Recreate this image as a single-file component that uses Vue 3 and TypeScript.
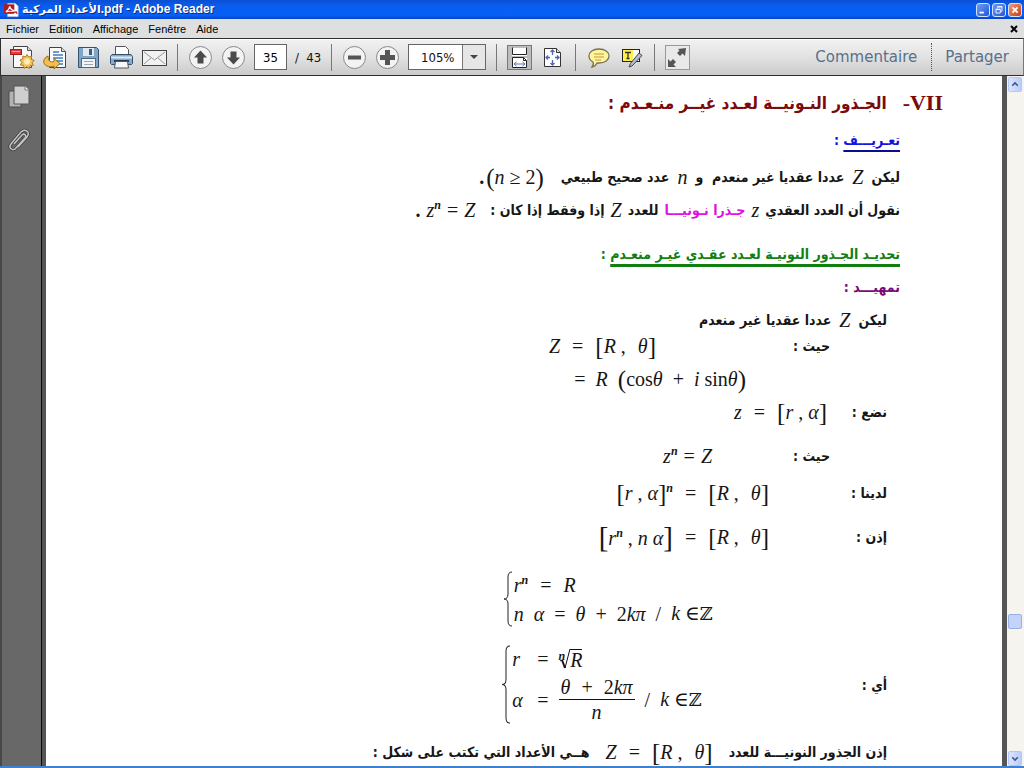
<script setup lang="ts">
import { ref } from 'vue'

const menus: string[] = ['Fichier', 'Edition', 'Affichage', 'Fenêtre', 'Aide']
const page = ref('35')
const zoom = ref('105%')
</script>

<template>
  <div class="app">
    <header class="titlebar">
      <svg class="logo" viewBox="0 0 16 16" aria-hidden="true">
        <path d="M4 1h8l3 3v11H4z" fill="#fff" stroke="#b9c4dc" />
        <rect x="0" y="2" width="11" height="10" fill="#b3161b" />
        <path d="M2 10c3-2 4-4 4-6 1 3 2 4 8 6-6-1-9-1-12 0z" fill="none" stroke="#fff" stroke-width="1.3" />
        <path d="M6 11l7-1 1 2" fill="none" stroke="#b3161b" stroke-width="1.3" />
      </svg>
      <h1><bdi>الأعداد المركبة</bdi>.pdf - Adobe Reader</h1>
      <div class="winbuttons">
        <button aria-label="Réduire"><svg viewBox="0 0 14 14"><path d="M3 10h5" stroke="#fff" stroke-width="2" /></svg></button>
        <button aria-label="Restaurer"><svg viewBox="0 0 14 14"><path d="M5.500 5V3.500h5v5H9M3.500 6.500h5v4h-5zM3 6h6M5 3h6" fill="none" stroke="#fff" /></svg></button>
        <button class="close" aria-label="Fermer"><svg viewBox="0 0 14 14"><path d="M4 4l6 6M10 4l-6 6" stroke="#fff" stroke-width="2" /></svg></button>
      </div>
    </header>

    <nav class="menubar">
      <button v-for="m in menus" :key="m">{{ m }}</button>
      <button class="closedoc" aria-label="Fermer le document"><svg viewBox="0 0 8 8"><path d="M1 1l6 6M7 1L1 7" stroke="#000" stroke-width="2" /></svg></button>
    </nav>

    <div class="toolbar">
      <button aria-label="Créer un PDF">
        <svg viewBox="0 0 25 25">
          <path d="M3.500 1.500h14l4 4v17h-18z" fill="#f8f9fa" stroke="#444" /><path d="M17.500 1.500v4h4" fill="#ddd" stroke="#555" />
          <rect x="0.500" y="4.500" width="11" height="5" fill="#dc3c3c" stroke="#a31f22" /><path d="M2 6.500h8" stroke="#f0a0a0" />
          <path d="M17 9.500l1.700 2.600 3-.8-.4 3 3 1.200-2.300 2 1.300 2.800-3.100.2-.9 3-2.500-1.800-2.600 1.700-.7-3-3.100-.4 1.500-2.700-2-2.300 2.900-1 .1-3 2.800 1z" fill="#f6c663" stroke="#b57a1c" />
          <circle cx="17" cy="16.500" r="3" fill="#fdebb8" />
        </svg>
      </button>
      <button aria-label="Ouvrir">
        <svg viewBox="0 0 25 25">
          <path d="M6.500 2.500h12l4 4v16h-16z" fill="#fbfbfb" stroke="#444" /><path d="M18.500 2.500v4h4" fill="#ddd" stroke="#555" />
          <path d="M10 7h6M10 10h10M10 13h10M13 16h7M15 19h5" stroke="#3f7ec0" stroke-width="1.400" />
          <path d="M5 11c-5 2-6 8-1 10 2 1 5 1 7 0v3l6-5.500-6-5v3c-3 1-6 0-6-5.500z" fill="#f2c04e" stroke="#99691b" />
        </svg>
      </button>
      <button aria-label="Enregistrer">
        <svg viewBox="0 0 25 25">
          <path d="M2.500 2.500h18l2 2v18h-20z" fill="#7fa5c7" stroke="#34526f" />
          <rect x="7" y="3" width="11" height="8" fill="#dfe9f2" /><rect x="13" y="4" width="3" height="6" fill="#3d5d7c" />
          <rect x="5.500" y="13.500" width="14" height="9" fill="#f3f4f5" stroke="#4c6a86" /><path d="M8 16.500h9M8 19.500h9" stroke="#9aa7b3" />
        </svg>
      </button>
      <button aria-label="Imprimer">
        <svg viewBox="0 0 25 25">
          <path d="M6.500 1.500h10l3 3v7h-13z" fill="#fff" stroke="#555" />
          <path d="M3 9.500h19l1.500 2v7l-1 1h-20l-1-1v-7z" fill="#86a9c9" stroke="#33526f" />
          <path d="M2 12.500h21" stroke="#dce9f4" stroke-width="2" /><path d="M5 16h15" stroke="#243b50" stroke-width="2" />
          <path d="M6.500 16.500h12l1 6.500h-14z" fill="#f6f7f8" stroke="#555" />
        </svg>
      </button>
      <button aria-label="Envoyer par courriel">
        <svg viewBox="0 0 25 25">
          <rect x="0.500" y="5.500" width="24" height="15" fill="#f1f1f1" stroke="#444" />
          <path d="M2 7l10.500 8L23 7M2 19l7-6M23 19l-7-6" fill="none" stroke="#999" />
        </svg>
      </button>
      <span class="sep"></span>
      <button aria-label="Page précédente">
        <svg viewBox="0 0 25 25"><circle cx="12.500" cy="12.500" r="11" fill="#f3f3f3" stroke="#888" /><path d="M12.500 5.500l6.500 7h-3.500v6h-6v-6H6z" fill="#4a4a4a" /></svg>
      </button>
      <button aria-label="Page suivante">
        <svg viewBox="0 0 25 25"><circle cx="12.500" cy="12.500" r="11" fill="#f3f3f3" stroke="#888" /><path d="M12.500 19.500l6.500-7h-3.500v-6h-6v6H6z" fill="#4a4a4a" /></svg>
      </button>
      <input v-model="page" class="pagebox" aria-label="Page" />
      <span class="total">/&nbsp; 43</span>
      <span class="sep"></span>
      <button aria-label="Zoom arrière">
        <svg viewBox="0 0 25 25"><circle cx="12.500" cy="12.500" r="11" fill="#f3f3f3" stroke="#888" /><path d="M6 12.500h13" stroke="#555" stroke-width="4" /></svg>
      </button>
      <button aria-label="Zoom avant">
        <svg viewBox="0 0 25 25"><circle cx="12.500" cy="12.500" r="11" fill="#f3f3f3" stroke="#888" /><path d="M5 12.500h15M12.500 5v15" stroke="#555" stroke-width="5" /></svg>
      </button>
      <div class="zoombox">
        <select v-model="zoom" aria-label="Zoom"><option>105%</option></select>
        <span class="arrow"><svg viewBox="0 0 8 4"><path d="M0 0h8L4 4z" fill="#444" /></svg></span>
      </div>
      <span class="sep"></span>
      <button class="pressed" aria-label="Largeur de page">
        <svg viewBox="0 0 23 23">
          <path d="M4 2h15v8H4zM4 12h15v10H4z" fill="#fff" /><path d="M4.500 1.500v7h14v-7" fill="none" stroke="#222" />
          <path d="M4.500 21.500v-10h11l3 3v7z" fill="#fff" stroke="#222" /><path d="M15.500 11.500v3h3" fill="none" stroke="#222" />
          <path d="M6 18h11M8.500 16L6 18l2.500 2M14.500 16l2.500 2-2.500 2" fill="none" stroke="#5b74b4" />
        </svg>
      </button>
      <button aria-label="Page entière">
        <svg viewBox="0 0 25 25">
          <path d="M4.500 3.500h12l4 4v14h-16z" fill="#fff" stroke="#333" /><path d="M16.500 3.500v4h4" fill="#ddd" stroke="#333" />
          <path d="M6 12.500h4M15 12.500h4M12.500 5v5M12.500 15v5M8 10.500l-2 2 2 2M17 10.500l2 2-2 2M10.500 7l2-2 2 2M10.500 18l2 2 2-2" fill="none" stroke="#4d69b3" stroke-width="1.300" />
        </svg>
      </button>
      <span class="sep"></span>
      <button aria-label="Ajouter une note">
        <svg viewBox="0 0 25 25">
          <path d="M13 4c6 0 10 3 10 7s-4 7-10 7h-2c-1 2-3 4-5 4 1-1 2-3 1-5-2-1-4-3-4-6 0-4 4-7 10-7z" fill="#fff59a" stroke="#77705c" stroke-width="1.300" />
          <path d="M8 9h10M8 12h10M9 15h6" stroke="#c29c3a" />
        </svg>
      </button>
      <button aria-label="Surligner le texte">
        <svg viewBox="0 0 25 25">
          <rect x="3.500" y="4.500" width="17" height="12" fill="#fff" stroke="#222" /><rect x="4" y="5" width="10" height="11" fill="#fff04a" />
          <path d="M6 7.500h6M9 7v7M7.500 13.500h3" stroke="#333" stroke-width="1.300" />
          <path d="M13 21l-3 1 1.500-3.500L20 8l3 2.500z" fill="#b5bdca" stroke="#3d4658" />
        </svg>
      </button>
      <span class="sep"></span>
      <button class="framed" aria-label="Mode lecture">
        <svg viewBox="0 0 23 23"><path d="M12 3l8-1-1 8-2.500-2.500-2.500 2.500-3-3 2.500-2.500zM2 13l2.500 2.500L7 13l3 3-2.500 2.500L10 21H2z" fill="#555" /></svg>
      </button>
      <a class="task first" href="#commentaire">Commentaire</a>
      <a class="task" href="#partager">Partager</a>
    </div>

    <div class="work">
      <aside class="side">
        <button aria-label="Vignettes"><svg viewBox="0 0 22 24"><path d="M1 6h12v16H1z" fill="#b4b4b4" stroke="#4a4a4a" /><path d="M6 1h11l4 4v14H6z" fill="#cfcfcf" stroke="#555" /><path d="M17 1v4h4" fill="#f2f2f2" stroke="#777" /></svg></button>
        <button aria-label="Pièces jointes"><svg viewBox="0 0 22 24"><path d="M6 16l8-9c2-2 5 0 3 3l-9 10c-3 4-8 0-5-4L13 4c4-4 10 0 6 5l-9 10" fill="none" stroke="#3f3f3f" stroke-width="3" /><path d="M6 16l8-9c2-2 5 0 3 3l-9 10c-3 4-8 0-5-4L13 4c4-4 10 0 6 5l-9 10" fill="none" stroke="#c4c4c4" stroke-width="1.500" /></svg></button>
      </aside>

      <main class="page" dir="rtl">
        <h2 class="row sec"><span class="num" dir="ltr">-VII</span><span>الجـذور النـونيــة لعـدد غيــر منـعـدم :</span></h2>

        <h3 class="row g13 def"><u>تعـريـــف</u>&nbsp;:</h3>

        <p class="row g13 s8">
          <span>ليكن</span><i class="m">Z</i><span>عددا عقديا غير منعدم &nbsp;و</span><i class="m">n</i><span>عدد صحيح طبيعي</span>
          <span class="f far tight" dir="ltr"><b>.</b><span><span class="br">(</span><i>n</i> ≥ 2<span class="br">)</span></span></span>
        </p>

        <p class="row g9 s6">
          <span>نقول أن العدد العقدي</span><i class="m">z</i><span class="pink">جـذرا نـونيـــا</span><span>للعدد</span><i class="m">Z</i><span>إذا وفقط إذا كان :</span>
          <span class="f far" dir="ltr"><b>.</b><i>z<sup>n</sup></i> = <i>Z</i></span>
        </p>

        <h3 class="row g20 green"><u>تحديـد الجـذور النونيـة لعـدد عقـدي غيـر منعـدم</u>&nbsp;:</h3>
        <h3 class="row g9 purple">تمهيـــد :</h3>

        <p class="row g9 in s8"><span>ليكن</span><i class="m">Z</i><span>عددا عقديا غير منعدم</span></p>

        <p class="row g2 deep">
          <span class="l174">حيث :</span>
          <span class="f wide" dir="ltr"><i>Z</i><span>=</span><span><span class="br">[</span><i>R</i> ,</span><span><i>θ</i><span class="br">]</span></span></span>
        </p>
        <p class="row g9 in">
          <span class="l141"></span>
          <span class="f mid" dir="ltr"><span>=</span><i>R</i><span><span class="br">(</span>cos<i>θ</i></span><span>+</span><span><i>i</i> sin<i>θ</i><span class="br">)</span></span></span>
        </p>
        <p class="row g9 in">
          <span class="l60">نضع :</span>
          <span class="f wide" dir="ltr"><i>z</i><span>=</span><span><span class="br">[</span><i>r</i> , <i>α</i><span class="br">]</span></span></span>
        </p>
        <p class="row g20 deep">
          <span class="l118">حيث :</span>
          <span class="f" dir="ltr"><i>z<sup>n</sup></i> = <i>Z</i></span>
        </p>
        <p class="row g13 in">
          <span class="l118">لدينا :</span>
          <span class="f wide" dir="ltr"><span><span class="br">[</span><i>r</i> , <i>α</i><span class="br">]</span><sup><i>n</i></sup></span><span>=</span><span><span class="br">[</span><i>R</i> ,</span><span><i>θ</i><span class="br">]</span></span></span>
        </p>
        <p class="row g20 in">
          <span class="l118">إذن :</span>
          <span class="f wide" dir="ltr"><span><span class="br tall">[</span><i>r<sup>n</sup></i> , <i>n</i> <i>α</i><span class="br tall">]</span></span><span>=</span><span><span class="br">[</span><i>R</i> ,</span><span><i>θ</i><span class="br">]</span></span></span>
        </p>

        <div class="row g22 in">
          <span class="l174"></span>
          <div class="cases" dir="ltr">
            <svg class="brace" viewBox="0 0 8 56" preserveAspectRatio="none"><path d="M8 1Q4 1 4 6V23Q4 28 0 28Q4 28 4 33V50Q4 55 8 55" fill="none" stroke="#222" /></svg>
            <div class="lines">
              <span class="f wide"><i>r<sup>n</sup></i><span>=</span><i>R</i></span>
              <span class="f mid"><i>n</i><i>α</i><span>=</span><i>θ</i><span>+</span><span>2<i>kπ</i></span><span>/</span><span><i>k</i> ∈<span class="zz">ℤ</span></span></span>
            </div>
          </div>
        </div>

        <div class="row g18 in">
          <span class="l185">أي :</span>
          <div class="cases" dir="ltr">
            <svg class="brace" viewBox="0 0 8 78" preserveAspectRatio="none"><path d="M8 1Q4 1 4 6V34Q4 39 0 39Q4 39 4 44V72Q4 77 8 77" fill="none" stroke="#222" /></svg>
            <div class="lines">
              <span class="f mid"><i class="lhs">r</i><span>=</span>
                <span class="root"><i class="idx">n</i><svg viewBox="0 0 10 20"><path d="M0 12l2-1" fill="none" stroke="#111" /><path d="M2 11l3 8" stroke="#111" stroke-width="2" /><path d="M5 19L10 0" stroke="#111" /></svg><i class="rad">R</i></span>
              </span>
              <span class="f mid"><i class="lhs">α</i><span>=</span>
                <span class="frac"><span class="top"><i>θ</i><span>+</span><span>2<i>kπ</i></span></span><i>n</i></span>
                <span>/</span><span><i>k</i> ∈<span class="zz">ℤ</span></span>
              </span>
            </div>
          </div>
        </div>

        <p class="row g16 in s16">
          <span>إذن الجذور النونيـــة للعدد</span>
          <span class="f wide" dir="ltr"><i>Z</i><span>=</span><span><span class="br">[</span><i>R</i> ,</span><span><i>θ</i><span class="br">]</span></span></span>
          <span>هــي الأعداد التي تكتب على شكل :</span>
        </p>
      </main>

      <div class="scroll">
        <button aria-label="Défiler vers le haut"><svg viewBox="0 0 15 15"><path d="M4 9l3.500-3.500L11 9" fill="none" stroke="#43578b" stroke-width="2" /></svg></button>
        <span class="before"></span>
        <span class="thumb"></span>
        <span class="after"></span>
        <button aria-label="Défiler vers le bas"><svg viewBox="0 0 15 15"><path d="M4 6l3.500 3.500L11 6" fill="none" stroke="#43578b" stroke-width="2" /></svg></button>
      </div>
    </div>
  </div>
</template>

<style>
body { background: #fff; }
</style>

<style scoped>
* { box-sizing: border-box; }
.app { display: flex; flex-direction: column; height: 100vh; overflow: hidden; border-bottom: 2px solid #3f80cf; font-family: "Liberation Sans", "DejaVu Sans", sans-serif; }
button { padding: 0; border: 0; background: none; color: inherit; font: inherit; }
svg { display: block; }

.titlebar { display: flex; align-items: center; flex: none; height: 19px; padding: 0 2px 0 4px; background: linear-gradient(#0a4fd0, #0a5cf0 30%, #0660f8 80%, #0345c8); color: #fff; }
.logo { width: 15px; height: 16px; margin-right: 3px; }
h1 { flex: 1; margin: 0; font: bold 12px/18px "Liberation Sans", "DejaVu Sans", sans-serif; text-shadow: 1px 1px #0a2a80; white-space: nowrap; }
h1 bdi { font-family: "DejaVu Sans", sans-serif; font-size: 11px; }
.winbuttons { display: flex; gap: 2px; }
.winbuttons button { width: 14px; height: 14px; border: 1px solid #d5e2ff; border-radius: 3px; background: linear-gradient(135deg, #6e9cf8, #2257d6); }
.winbuttons .close { background: linear-gradient(135deg, #f09a78, #cc3c14); }

.menubar { display: flex; align-items: center; flex: none; gap: 10px; height: 19px; padding: 0 6px; background: #dedfe0; color: #000; font-size: 11px; }
.closedoc { margin-left: auto; }
.closedoc svg { width: 8px; height: 8px; }

.toolbar { display: flex; align-items: center; flex: none; gap: 8px; height: 38px; padding: 0 14px 0 9px; border: 1px solid #2e2e2e; border-right-color: #777; background: linear-gradient(#f2f2f2, #e2e2e2 50%, #cbcbcb); font: 13px "DejaVu Sans Condensed", "DejaVu Sans", sans-serif; color: #111; box-shadow: inset 0 1px #fff; }
.toolbar button, .toolbar button svg { flex: none; width: 25px; height: 25px; }
.toolbar .pressed { border: 1px solid #777; background: #bdbdbd; }
.toolbar .framed { border: 1px solid #999; background: #e9e9e9; }
.toolbar .pressed svg, .toolbar .framed svg { width: 23px; height: 23px; }
.sep { flex: none; width: 1px; height: 27px; margin: 0 2px; background: #777; }
.pagebox { width: 33px; height: 26px; padding: 0; border: 1px solid #666; background: #fff; font: inherit; text-align: center; }
.total { width: 26px; white-space: nowrap; }
.zoombox { position: relative; flex: none; width: 78px; height: 26px; border: 1px solid #666; background: #fff; }
.zoombox select { width: 100%; height: 100%; padding: 0 0 0 12px; border: 0; background: none; appearance: none; font: inherit; color: inherit; }
.arrow { position: absolute; top: 0; right: 0; display: flex; align-items: center; justify-content: center; width: 23px; height: 100%; border-left: 1px solid #777; background: #e6e6e6; pointer-events: none; }
.arrow svg { width: 8px; height: 4px; }
.task { padding-left: 13px; border-left: 1px dotted #555; color: #58708c; font: 15px/28px "DejaVu Sans", sans-serif; text-decoration: none; }
.first { margin-left: auto; padding: 0 6px 0 0; border: 0; }

.work { display: flex; flex: 1; min-height: 0; }
.side { display: flex; flex-direction: column; align-items: center; flex: none; gap: 19px; width: 46px; padding: 9px 4px 0 0; border-right: 4px solid #555; background: #686868; box-shadow: inset 2px 0 #484848, inset -1px 0 #0a0a0a; }
.side svg { width: 22px; height: 24px; }

.page { flex: 1; min-width: 0; padding: 15px 102px 0 0; overflow: hidden; background: #fff; color: #161616; font: bold 14px/24px "DejaVu Sans Condensed", "DejaVu Sans", sans-serif; }
.row { display: flex; align-items: center; margin: 0; min-height: 24px; white-space: nowrap; }
p.row, .row > .f { height: 24px; }
h2, h3 { font-size: 14px; line-height: 24px; }
.sec { gap: 16px; margin-right: -43px; color: #7c0a0a; font-size: 17px; }
.num { font: bold 22px/24px "Liberation Serif", serif; }
.g2 { margin-top: 2px; }
.g9 { margin-top: 9px; }
.g13 { margin-top: 13px; }
.g16 { margin-top: 16px; }
.g18 { margin-top: 18px; }
.g20 { margin-top: 20px; }
.g22 { margin-top: 22px; }
.in { padding-right: 13px; }
.deep { padding-right: 70px; }
.s6 { gap: 6px; }
.s8 { gap: 8px; }
.s16 { gap: 16px; }
.def { color: #1414e0; }
.def u { text-decoration: underline 2px #0c0c90; text-underline-offset: 5px; }
.green { color: #118011; }
.green u { text-decoration: underline 3px; text-underline-offset: 5px; }
.purple { color: #770a77; }
.pink { color: #e010e0; }
.far { margin-right: 9px; }
.l60, .l118, .l141, .l174, .l185 { flex: none; }
.l60 { width: 60px; }
.l118 { width: 118px; }
.l141 { width: 141px; }
.l174 { width: 174px; }
.l185 { width: 185px; }

.m, .f { font: 20px/24px "Liberation Serif", "DejaVu Serif", serif; }
.m { font-style: italic; }
.f { display: inline-flex; align-items: center; gap: 6px; }
.tight { gap: 2px; }
.wide { gap: 12px; }
.mid { gap: 10px; }
.f sup { font-size: 12px; line-height: 0; vertical-align: 8px; font-weight: bold; }
.br { font-size: 25px; line-height: 24px; vertical-align: -2px; }
.tall { font-size: 29px; }
.cases { display: flex; gap: 2px; }
.brace { width: 8px; height: auto; }
.lines { display: flex; flex-direction: column; align-items: flex-start; gap: 4px; padding-top: 2px; }
.zz { font-family: "DejaVu Serif", "DejaVu Sans", serif; font-size: 18px; }
.lhs { width: 15px; }
.root { display: flex; align-items: center; }
.root svg { width: 10px; height: 20px; }
.idx { align-self: flex-start; margin-right: -5px; font-size: 12px; font-weight: bold; line-height: 14px; }
.rad { border-top: 1px solid #111; line-height: 20px; }
.frac { display: flex; flex-direction: column; align-items: center; }
.top { display: flex; gap: 11px; padding: 0 2px; border-bottom: 1px solid #111; }

.scroll { display: flex; flex-direction: column; flex: none; width: 22px; padding: 1px 2px 0 1px; border-left: 5px solid #555; background: #f5f4ef; }
.scroll button { flex: none; width: 14px; height: 15px; border: 1px solid #b5c7f5; border-radius: 2px; background: linear-gradient(90deg, #dbe5fe, #b8ccfa); }
.scroll button svg { width: 12px; height: 13px; }
.thumb { flex: none; width: 14px; height: 15px; border: 1px solid #98b0e8; border-radius: 2px; background: #c3d3fb; }
.before { flex: 81; }
.after { flex: 19; }
</style>
